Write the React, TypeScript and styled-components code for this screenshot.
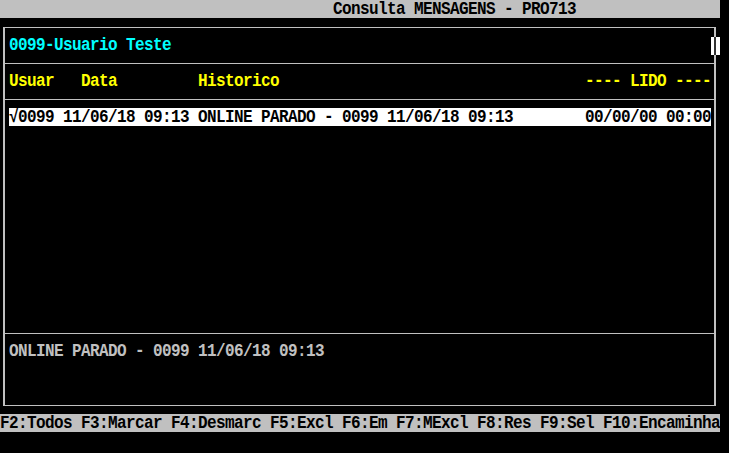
import React from "react";
import styled, { createGlobalStyle } from "styled-components";

const GlobalStyle = createGlobalStyle`
  html, body {
    margin: 0;
    padding: 0;
    background: #000;
  }
  body {
    width: 729px;
    height: 453px;
    overflow: hidden;
  }
`;

const Screen = styled.div`
  width: 720px;
  height: 450px;
  display: flex;
  flex-direction: column;
  background: #000;
  color: #c0c0c0;
  font-family: "Liberation Mono", "DejaVu Sans Mono", monospace;
  font-size: 16px;
  font-weight: bold;
  letter-spacing: -0.6px;
  line-height: 18px;
  white-space: pre;
`;

// tall, narrow glyphs of the text-mode font
const Text = styled.span`
  display: inline-block;
  transform: translateY(1px) scaleY(1.14);
  transform-origin: 50% 55%;
`;

const TitleBar = styled.div`
  height: 18px;
  flex: none;
  background: #c0c0c0;
  color: #000;
  padding-left: 333px;
`;

const Frame = styled.div`
  position: relative;
  flex: 1;
  display: flex;
  flex-direction: column;
  margin: 9px 4px 8px 3px;
  padding-top: 8px;
  border-style: solid;
  border-color: #c0c0c0;
  border-width: 1px 2px;
`;

const ScrollThumb = styled.div`
  position: absolute;
  top: 9px;
  right: -6px;
  width: 9px;
  height: 18px;
  background: linear-gradient(
    to right,
    #fff 3px,
    #333 3px,
    #333 5px,
    #fff 5px
  );
`;

const Row = styled.div<{ $color?: string; $selected?: boolean }>`
  height: 18px;
  flex: none;
  display: flex;
  justify-content: space-between;
  margin: 0 3px 0 4px;
  color: ${(p) => (p.$selected ? "#000" : p.$color || "#c0c0c0")};
  background: ${(p) => (p.$selected ? "#fff" : "transparent")};
`;

const Divider = styled.div`
  height: 18px;
  flex: none;
  display: flex;
  align-items: center;

  &::before {
    content: "";
    flex: 1;
    height: 1px;
    background: #c0c0c0;
  }
`;

const Filler = styled.div`
  flex: 1;
`;

const BottomSpace = styled.div`
  height: 45px;
  flex: none;
`;

const KeyBar = styled.div`
  height: 18px;
  flex: none;
  background: #c0c0c0;
  color: #000;
`;

const BlankLine = styled.div`
  height: 18px;
  flex: none;
`;

const keys = [
  "F2:Todos",
  "F3:Marcar",
  "F4:Desmarc",
  "F5:Excl",
  "F6:Em",
  "F7:MExcl",
  "F8:Res",
  "F9:Sel",
  "F10:Encaminha",
];

const messages = [
  {
    text: "√0099 11/06/18 09:13 ONLINE PARADO - 0099 11/06/18 09:13",
    read: "00/00/00 00:00",
  },
];

export default function App() {
  return (
    <Screen>
      <GlobalStyle />
      <TitleBar>
        <Text>Consulta MENSAGENS - PRO713</Text>
      </TitleBar>
      <Frame>
        <ScrollThumb />
        <Row $color="#00ffff">
          <Text>0099-Usuario Teste</Text>
        </Row>
        <Divider />
        <Row $color="#ffff00">
          <Text>{"Usuar   Data         Historico"}</Text>
          <Text>---- LIDO ----</Text>
        </Row>
        <Divider />
        {messages.map((m, i) => (
          <Row key={i} $selected={i === 0}>
            <Text>{m.text}</Text>
            <Text>{m.read}</Text>
          </Row>
        ))}
        <Filler />
        <Divider />
        <Row>
          <Text>ONLINE PARADO - 0099 11/06/18 09:13</Text>
        </Row>
        <BottomSpace />
      </Frame>
      <KeyBar>
        <Text>{keys.join(" ")}</Text>
      </KeyBar>
      <BlankLine />
    </Screen>
  );
}
